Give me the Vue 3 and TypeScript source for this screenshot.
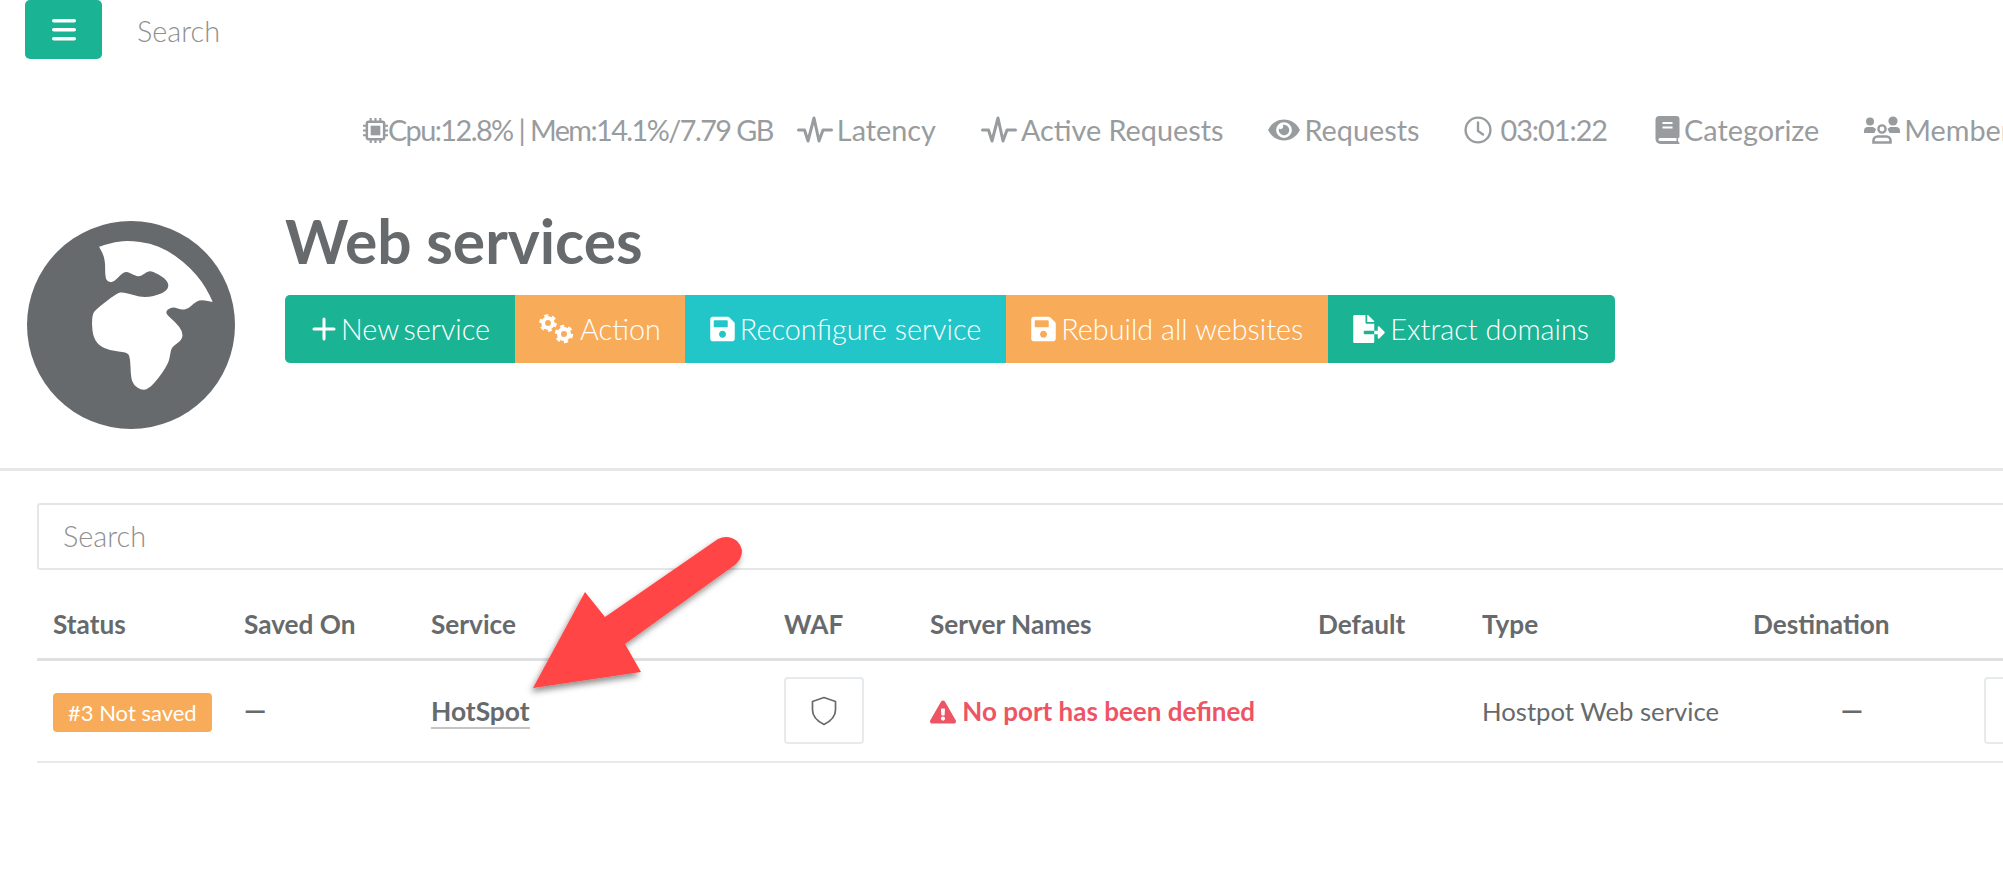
<script setup lang="ts">
const pts: [number, number][] = [
  [297,140],[297,140],[345,125],[390,122],[450,130],[500,150],[550,185],[590,225],[618,265],[637,305],[637,305],
  [600,298],[580,310],[565,325],[545,330],[520,320],[500,328],[497,342],[525,365],[548,395],[545,420],[515,440],
  [510,460],[505,490],[470,540],[445,565],[425,570],[400,555],[392,530],[390,470],[380,455],[330,452],[295,435],
  [277,405],[275,345],[290,325],[350,280],[370,275],[430,295],[490,280],[508,258],[495,235],[455,212],[440,215],
  [420,230],[400,225],[378,213],[360,225],[340,247],[322,245],[315,230],[315,175]
]
function smooth(p: [number, number][]): string {
  const mid = (a: [number, number], b: [number, number]) => `${(a[0] + b[0]) / 2} ${(a[1] + b[1]) / 2}`
  let d = `M${mid(p[p.length - 1], p[0])}`
  p.forEach((q, i) => {
    d += ` Q${q[0]} ${q[1]} ${mid(q, p[(i + 1) % p.length])}`
  })
  return d + 'Z'
}
const continent = smooth(pts)
const save = 'M433.941 129.941l-83.882-83.882A48 48 0 0 0 316.118 32H48C21.49 32 0 53.49 0 80v352c0 26.51 21.49 48 48 48h352c26.51 0 48-21.49 48-48V163.882a48 48 0 0 0-14.059-33.941zM224 416c-35.346 0-64-28.654-64-64 0-35.346 28.654-64 64-64s64 28.654 64 64c0 35.346-28.654 64-64 64zm96-304.52V212c0 6.627-5.373 12-12 12H76c-6.627 0-12-5.373-12-12V108c0-6.627 5.373-12 12-12h228.52c3.183 0 6.235 1.264 8.485 3.515l3.48 3.48A11.996 11.996 0 0 1 320 111.48z'
const headers = ['Status', 'Saved On', 'Service', 'WAF', 'Server Names', 'Default', 'Type', 'Destination', '']
const colWidths = [191, 187, 353, 146, 388, 164, 271, 231, 120]
</script>

<template>
  <div class="page">
    <div class="topbar">
      <button class="burger" aria-label="Menu">
        <svg width="24" height="22" viewBox="0 0 24 22"><rect x="0" y="0" width="24" height="3.6" rx="1.8" /><rect x="0" y="9" width="24" height="3.6" rx="1.8" /><rect x="0" y="18" width="24" height="3.6" rx="1.8" /></svg>
      </button>
      <span class="top-search">Search</span>
    </div>

    <div class="stats">
      <span class="stat cpu">
        <svg width="25" height="27" viewBox="0 0 26 28" class="ico"><rect x="4" y="5" width="18" height="18" rx="2" fill="none" stroke="currentColor" stroke-width="2.6" /><rect x="8" y="9" width="10" height="10" fill="currentColor" /><path d="M8 1v4M13 1v4M18 1v4M8 23v4M13 23v4M18 23v4M0 9h4M0 14h4M0 19h4M22 9h4M22 14h4M22 19h4" stroke="currentColor" stroke-width="2.2" /></svg>
        <span>Cpu:12.8% | Mem:14.1%/7.79 GB</span>
      </span>
      <span class="stat">
        <svg width="36" height="30" viewBox="0 0 36 30" class="ico"><polyline points="1.5,15 7.5,15 11,26 17,3 22,26 26,15 34.5,15" fill="none" stroke="currentColor" stroke-width="3" stroke-linecap="round" stroke-linejoin="round" /></svg>
        <span>Latency</span>
      </span>
      <span class="stat">
        <svg width="36" height="30" viewBox="0 0 36 30" class="ico"><polyline points="1.5,15 7.5,15 11,26 17,3 22,26 26,15 34.5,15" fill="none" stroke="currentColor" stroke-width="3" stroke-linecap="round" stroke-linejoin="round" /></svg>
        <span>Active Requests</span>
      </span>
      <span class="stat">
        <svg width="32" height="28" viewBox="0 0 576 512" class="ico"><path fill="currentColor" d="M572.52 241.4C518.29 135.59 410.93 64 288 64S57.68 135.64 3.48 241.41a32.35 32.35 0 0 0 0 29.19C57.71 376.41 165.07 448 288 448s230.32-71.64 284.52-177.41a32.35 32.35 0 0 0 0-29.19zM288 400a144 144 0 1 1 144-144 143.93 143.93 0 0 1-144 144zm0-240a95.31 95.31 0 0 0-25.31 3.79 47.85 47.85 0 0 1-66.9 66.9A95.78 95.78 0 1 0 288 160z" /></svg>
        <span>Requests</span>
      </span>
      <span class="stat clock">
        <svg width="28" height="28" viewBox="0 0 28 28" class="ico"><circle cx="14" cy="14" r="12.4" fill="none" stroke="currentColor" stroke-width="2.4" /><path d="M14 6.5V15l5 3.5" fill="none" stroke="currentColor" stroke-width="2.4" stroke-linecap="round" /></svg>
        <span>03:01:22</span>
      </span>
      <span class="stat">
        <svg width="25" height="28" viewBox="0 0 24 28" class="ico"><path fill="currentColor" d="M4 0h17a3 3 0 0 1 3 3v18l-1.5 1.5V25L24 27v1H5a5 5 0 0 1-5-5V4a4 4 0 0 1 4-4z" /><path d="M7 7h10M7 11.5h10" stroke="#fff" stroke-width="2" /><path d="M3 23.5a1.5 1.5 0 0 1 1.5-1.5H21v3H4.5A1.5 1.5 0 0 1 3 23.5z" fill="#fff" /></svg>
        <span>Categorize</span>
      </span>
      <span class="stat">
        <svg width="36" height="28" viewBox="0 0 36 28" class="ico"><circle cx="6" cy="5.5" r="4" fill="currentColor" /><circle cx="29" cy="5" r="4.6" fill="currentColor" /><path fill="currentColor" d="M0 17v-2a4 4 0 0 1 4-4h5l3 2-1.5 4zM36 17v-2a4 4 0 0 0-4-4h-6l-2.500 2 2 4z" /><circle cx="18" cy="13" r="3.6" fill="none" stroke="currentColor" stroke-width="2.4" /><path fill="none" stroke="currentColor" stroke-width="2.6" d="M9.500 26.500v-2a4 4 0 0 1 4-4h9a4 4 0 0 1 4 4v2z" /></svg>
        <span>Members</span>
      </span>
    </div>

    <div class="heading">
      <svg class="globe" width="208" height="208" viewBox="81 63 623 623">
        <circle cx="392.5" cy="374.5" r="311.5" fill="#676a6c" />
        <path :d="continent" fill="#fff" />
      </svg>
      <div class="heading-main">
        <h1>Web services</h1>
        <div class="btn-group">
          <button class="btn green first">
            <svg width="24" height="24" viewBox="0 0 24 24"><path d="M12 2v20M2 12h20" stroke="#fff" stroke-width="3" stroke-linecap="round" /></svg>
            <span class="tight-word">New service</span>
          </button>
          <button class="btn orange action">
            <svg width="36" height="30" viewBox="0 0 36 30" fill="none" stroke="#fff">
              <circle cx="9" cy="9" r="4.8" stroke-width="3.8" />
              <circle cx="9" cy="9" r="7.4" stroke-width="2.8" stroke-dasharray="3.9 3.85" />
              <circle cx="25" cy="20" r="5" stroke-width="4" />
              <circle cx="25" cy="20" r="7.8" stroke-width="2.800" stroke-dasharray="4.1 4.07" />
            </svg>
            <span>Action</span>
          </button>
          <button class="btn cyan">
            <svg width="25" height="28" viewBox="0 0 448 512"><path fill="#fff" :d="save" /></svg>
            <span>Reconfigure service</span>
          </button>
          <button class="btn orange">
            <svg width="25" height="28" viewBox="0 0 448 512"><path fill="#fff" :d="save" /></svg>
            <span>Rebuild all websites</span>
          </button>
          <button class="btn green last">
            <svg width="32" height="28" viewBox="0 0 576 512"><path fill="#fff" d="M384 121.9c0-6.3-2.5-12.4-7-16.9L279.1 7c-4.5-4.5-10.6-7-17-7H256v128h128zM571 308l-95.7-96.4c-10.1-10.1-27.4-3-27.4 11.3V288h-64v64h64v65.2c0 14.3 17.3 21.4 27.4 11.3L571 332c6.6-6.6 6.6-17.4 0-24zm-379 28v-32c0-8.8 7.2-16 16-16h176V160H248c-13.2 0-24-10.8-24-24V0H24C10.7 0 0 10.7 0 24v464c0 13.3 10.7 24 24 24h336c13.3 0 24-10.7 24-24V352H208c-8.8 0-16-7.2-16-16z" /></svg>
            <span>Extract domains</span>
          </button>
        </div>
      </div>
    </div>

    <div class="content">
      <input class="search" type="text" placeholder="Search" />
      <table class="services">
        <colgroup>
          <col v-for="(w, i) in colWidths" :key="i" :style="{ width: w + 'px' }" />
        </colgroup>
        <thead>
          <tr>
            <th v-for="h in headers" :key="h">{{ h }}</th>
          </tr>
        </thead>
        <tbody>
          <tr>
            <td><span class="badge">#3 Not saved</span></td>
            <td><span class="dash">—</span></td>
            <td><a class="link">HotSpot</a></td>
            <td>
              <button class="square" aria-label="WAF">
                <svg width="26" height="30" viewBox="0 0 26 30"><path d="M13 1.5 24.500 5.500V14c0 7-6.500 12-11.500 14.500C8 26 1.500 21 1.500 14V5.500Z" fill="none" stroke="#676a6c" stroke-width="1.700" stroke-linejoin="round" /></svg>
              </button>
            </td>
            <td class="error">
              <svg width="26" height="24" viewBox="0 0 576 512"><path fill="#ed5565" d="M569.517 440.013C587.975 472.007 564.806 512 527.94 512H48.054c-36.937 0-59.999-40.055-41.577-71.987L246.423 23.985c18.467-32.009 64.72-31.951 83.154 0l239.94 416.028zM288 354c-25.405 0-46 20.595-46 46s20.595 46 46 46 46-20.595 46-46-20.595-46-46-46zm-43.673-165.346l7.418 136c.347 6.364 5.609 11.346 11.982 11.346h48.546c6.373 0 11.635-4.982 11.982-11.346l7.418-136c.375-6.874-5.098-12.654-11.982-12.654h-63.383c-6.884 0-12.356 5.78-11.981 12.654z" /></svg>
              No port has been defined
            </td>
            <td></td>
            <td class="type">Hostpot Web service</td>
            <td class="center"><span class="dash">—</span></td>
            <td><button class="square" aria-label="Delete"></button></td>
          </tr>
        </tbody>
      </table>
    </div>

    <svg class="arrow" width="240" height="180" viewBox="520 525 240 180">
      <defs>
        <filter id="arrow-shadow" x="-20%" y="-20%" width="140%" height="140%">
          <feDropShadow dx="-2" dy="4" stdDeviation="3" flood-color="#000" flood-opacity="0.45" />
        </filter>
      </defs>
      <path filter="url(#arrow-shadow)" fill="#ff4444" d="M533 688 585 592 605 617 718 539Q728 534 737 541 745 549 740 559 737 564 732 567L625 644 641 672Z" />
    </svg>
  </div>
</template>

<style>
html, body { margin: 0; background: #fff; }
</style>

<style scoped>
.page {
  position: relative;
  width: 2003px;
  height: 896px;
  overflow: hidden;
  font-family: Lato, "Open Sans", sans-serif;
  color: #676a6c;
  background: #fff;
}
.topbar { display: flex; align-items: center; height: 59px; padding-left: 25px; }
.burger {
  width: 77px; height: 59px; display: flex; align-items: center; justify-content: center;
  border: 0; border-radius: 5px; background: #1ab394; padding: 0;
}
.burger svg { fill: #fff; }
.top-search { margin-left: 35px; font-size: 28.8px; font-weight: 300; color: #8f8f8f; margin-top: 3px; }
.stats {
  display: flex; align-items: center; gap: 45px; height: 60px; margin-top: 41px;
  padding-left: 363px; white-space: nowrap; font-size: 28.8px; color: #999c9e;
}
.stat { display: flex; align-items: center; gap: 4px; flex: none; }
.cpu { gap: 0; margin-right: -21px; letter-spacing: -1.55px; }
.clock { gap: 8px; letter-spacing: -1px; margin-right: 3px; }
.ico { flex: none; }
.heading {
  display: flex; align-items: flex-start; gap: 50px; height: 247px; margin-top: 61px;
  padding-left: 27px; border-bottom: 3px solid #e7e7e7;
}
.globe { flex: none; }
.heading-main { display: flex; flex-direction: column; }
h1 { margin: 0; height: 74px; font-size: 60.5px; line-height: 40px; font-weight: 700; color: #676a6c; }
.btn-group { display: flex; }
.btn {
  display: flex; align-items: center; gap: 5px; height: 68px; border: 0;
  font-family: inherit; font-size: 28.8px; font-weight: 300; color: #fff; padding: 0 25px;
}
.tight-word { word-spacing: -3px; }
.green { background: #1ab394; }
.orange { background: #f8ac59; }
.cyan { background: #23c6c8; }
.first { border-radius: 5px 0 0 5px; padding-left: 27px; }
.action { padding: 0 24px; }
.last { border-radius: 0 5px 5px 0; padding-right: 26px; }
.content { padding: 32px 0 0 37px; }
.search {
  display: block; box-sizing: border-box; width: 2040px; height: 67px; padding: 0 24px 2px;
  border: 2px solid #e5e6e7; border-radius: 3px; outline: 0; font-family: inherit; font-size: 28.8px; font-weight: 300;
}
.search::placeholder { color: #8f8f8f; opacity: 1; }
.services { table-layout: fixed; width: 2051px; border-collapse: collapse; }
th {
  height: 89px; padding: 20px 0 0 16px; text-align: left; font-size: 26.2px; font-weight: 700;
  color: #676a6c; border-bottom: 3px solid #e0e0e0; box-sizing: border-box;
}
td {
  height: 103px; padding: 0 0 0 16px; font-size: 26px; font-weight: 400; color: #676a6c;
  border-bottom: 2px solid #e7eaec; box-sizing: border-box; white-space: nowrap;
}
.type { font-size: 25.7px; }
.badge {
  display: inline-block; margin-top: 4px; padding: 0 15px; height: 39px; line-height: 39px; border-radius: 4px;
  background: #f8ac59; color: #fff; font-size: 22px;
}
.dash { font-weight: 700; font-size: 28px; position: relative; top: -2px; }
.link { font-weight: 700; font-size: 26.4px; color: #676a6c; border-bottom: 2px solid #c4c4c4; }
.square {
  display: flex; align-items: center; justify-content: center; box-sizing: border-box; width: 80px; height: 67px;
  background: #fff; border: 2px solid #e7eaec; border-radius: 4px; padding: 0;
}
.error { color: #ed5565; font-weight: 700; }
.error svg { vertical-align: -3px; }
.center { text-align: center; padding-right: 17px; }
.arrow { position: absolute; left: 520px; top: 525px; }
</style>
